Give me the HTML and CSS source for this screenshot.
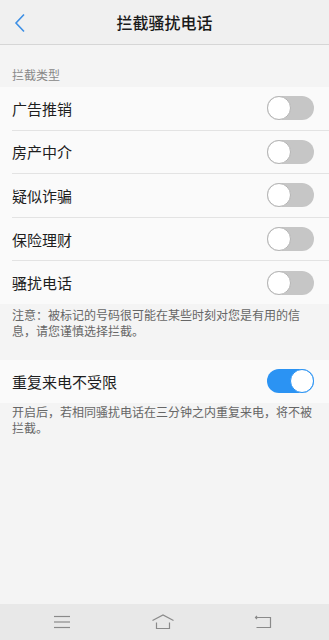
FILE: index.html
```html
<!DOCTYPE html>
<html lang="zh">
<head>
<meta charset="utf-8">
<link rel="stylesheet" href="styles.css">
</head>
<body>
<div class="page">
  <header class="header">
    <span class="back">
      <svg width="12" height="20" viewBox="0 0 12 20"><polyline points="10,1.5 2,10 10,18.5" fill="none" stroke="#3d8fe5" stroke-width="1.6"/></svg>
    </span>
    <h1 class="title">拦截骚扰电话</h1>
  </header>
  <main class="main">
    <div class="section-label">拦截类型</div>
    <ul class="list">
      <li class="row"><span>广告推销</span><span class="switch"></span></li>
      <li class="row"><span>房产中介</span><span class="switch"></span></li>
      <li class="row"><span>疑似诈骗</span><span class="switch"></span></li>
      <li class="row"><span>保险理财</span><span class="switch"></span></li>
      <li class="row"><span>骚扰电话</span><span class="switch"></span></li>
    </ul>
    <p class="note">注意：被标记的号码很可能在某些时刻对您是有用的信息，请您谨慎选择拦截。</p>
    <ul class="list list-second">
      <li class="row"><span>重复来电不受限</span><span class="switch on"></span></li>
    </ul>
    <p class="note note-second">开启后，若相同骚扰电话在三分钟之内重复来电，将不被拦截。</p>
  </main>
  <nav class="navbar">
    <svg width="18" height="14" viewBox="0 0 18 14"><g stroke="#8a8a8a" stroke-width="1.2"><line x1="1" y1="1.5" x2="17" y2="1.5"/><line x1="1" y1="7" x2="17" y2="7"/><line x1="1" y1="12.5" x2="17" y2="12.5"/></g></svg>
    <svg width="24" height="16" viewBox="0 0 24 16"><g fill="none" stroke="#8a8a8a" stroke-width="1.2"><polyline points="1.5,6.5 12,1 22.5,6.5"/><polyline points="5.5,8.5 5.5,14.5 18.5,14.5 18.5,8.5"/></g></svg>
    <svg width="18" height="14" viewBox="0 0 18 14"><g fill="none" stroke="#8a8a8a" stroke-width="1.2"><polyline points="3,1 1.5,2.5 3,4"/><polyline points="1.5,2.5 16.5,2.5 16.5,12.5 2.5,12.5"/></g></svg>
  </nav>
</div>
</body>
</html>
```
FILE: styles.css
```css
* { box-sizing: border-box; margin: 0; padding: 0; }
html, body { width: 329px; height: 640px; }
body {
  font-family: "Noto Sans CJK SC", "Noto Sans", sans-serif;
  background: #f4f4f4;
  color: #222;
}
.page {
  height: 640px;
  display: flex;
  flex-direction: column;
}
.header {
  height: 45px;
  background: #f0f0f0;
  border-bottom: 1px solid #d6d6d6;
  display: flex;
  align-items: center;
  justify-content: center;
  position: relative;
}
.back {
  position: absolute;
  left: 14px;
  top: 13px;
  display: flex;
}
.title {
  font-size: 16px;
  font-weight: 500;
  color: #1a1a1a;
  line-height: 20px;
  margin-top: -1px;
}
.main { flex: 1; }
.section-label {
  font-size: 12px;
  line-height: 16px;
  color: #888;
  padding: 22px 12px 4px;
}
.list {
  list-style: none;
  background: #fafafa;
  padding-left: 12px;
}
.row {
  height: 43.6px;
  display: flex;
  align-items: center;
  justify-content: space-between;
  padding-right: 15px;
  font-size: 15px;
  color: #1e1e1e;
  border-bottom: 1px solid #e3e3e3;
}
.row:last-child { border-bottom: none; height: 42.6px; }
.switch {
  width: 47px;
  height: 24px;
  border-radius: 12px;
  background: #c6c6c6;
  position: relative;
}
.switch::after {
  content: "";
  position: absolute;
  left: 0;
  top: 0;
  width: 24px;
  height: 24px;
  border-radius: 50%;
  background: #fff;
  border: 1px solid #b4b4b4;
  box-sizing: border-box;
}
.switch.on { background: #2b93f3; }
.switch.on::after {
  left: auto;
  right: 0;
  border-color: #2b93f3;
}
.note {
  font-size: 12px;
  line-height: 16px;
  color: #666;
  padding: 3px 12px 0;
}
.list-second { margin-top: 21px; }
.note-second { padding-top: 1px; }
.navbar {
  height: 36px;
  background: #e8e8e8;
  display: flex;
  align-items: center;
  justify-content: space-between;
  padding: 0 57px 0 53px;
}
```
